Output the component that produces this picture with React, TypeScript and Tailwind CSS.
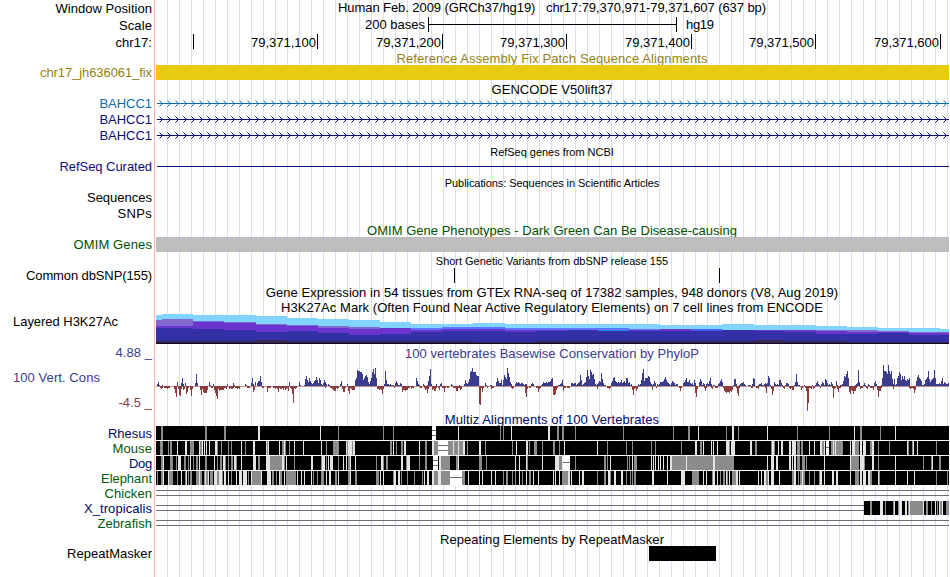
import type { ReactNode } from 'react';

type Run = [number, number];

interface Species {
  name: string;
  color: string;
  width: number;
  gray: Run[];
  light: Run[];
  gaps?: [number, number, 'single' | 'double'][];
}

const X0 = 156;
const X1 = 949;

const canvas = document.createElement('canvas').getContext('2d')!;

// Spreads the letters so the text advances exactly `width` pixels
function spacing(text: string, width: number, size: number) {
  canvas.font = `${size}px "Liberation Sans"`;
  return (width - canvas.measureText(text).width) / text.length;
}

function Fit({ text, width, size = 13 }: { text: string; width: number; size?: number }) {
  return <span style={{ letterSpacing: `${spacing(text, width, size)}px` }}>{text}</span>;
}

interface RowProps {
  height: string;
  label?: string;
  width?: number;
  labelClass?: string;
  side?: ReactNode;
  children?: ReactNode;
}

function Row({ height, label, width = 0, labelClass = 'text-black', side, children }: RowProps) {
  return (
    <div className={`flex shrink-0 ${height}`}>
      <div className={`w-[154px] shrink-0 pr-0.5 text-right ${labelClass}`}>
        {label ? <Fit text={label} width={width} /> : side}
      </div>
      <div className="w-[795px] border-l border-[#ffb0b0] pl-px bg-[linear-gradient(to_right,transparent_11px,#dcdcff_11px)] bg-size-[12px_100%] bg-origin-content bg-clip-content">
        {children}
      </div>
    </div>
  );
}

function Title({ text, width, small, className = '' }: { text: string; width: number; small?: boolean; className?: string }) {
  return (
    <div className={`pr-px text-center whitespace-pre ${small ? 'text-[11px] leading-[15px]' : ''} ${className}`}>
      <Fit text={text} width={width} size={small ? 11 : 13} />
    </div>
  );
}

function Track({ height, children }: { height: number; children: ReactNode }) {
  return (
    <svg className="block" width={X1 - X0} height={height} viewBox={`${X0} 0 ${X1 - X0} ${height}`} shapeRendering="crispEdges">
      {children}
    </svg>
  );
}

function GeneLine({ color }: { color: string }) {
  const arrows = [];
  for (let x = 162; x < X1; x += 8) arrows.push(`M${x - 2.5} 5.5l3 3l-3 3`);
  return (
    <Track height={16}>
      <rect x={157} y={8} width={792} height={1} fill={color} />
      <path d={arrows.join('')} fill="none" stroke={color} strokeWidth={1} shapeRendering="geometricPrecision" />
    </Track>
  );
}

function Ruler() {
  const ticks: [number, string][] = [
    [193, ''],
    [317, '79,371,100'],
    [442, '79,371,200'],
    [566, '79,371,300'],
    [691, '79,371,400'],
    [815, '79,371,500'],
    [940, '79,371,600'],
  ];
  return (
    <Track height={17}>
      {ticks.map(([x, text]) => (
        <g key={x}>
          <rect x={x} y={1} width={1} height={15} />
          {text && <text x={x - 66} y={14} textLength={65} fontSize={13}>{text}</text>}
        </g>
      ))}
    </Track>
  );
}

// start, light blue top, mauve top, violet top, blue top, dark top
const MARKS = [
  [156, 1, 6, 12, 14, 27], [162, 0, 5, 12, 14, 27], [193, 1, 7, 8, 15, 27], [224, 1, 8, 9, 16, 27],
  [256, 2, 10, 11, 18, 26], [287, 4, 11, 12, 17, 27], [318, 5, 12, 14, 19, 27], [349, 6, 13, 15, 21, 27],
  [380, 8, 14, 14, 20, 27], [411, 10, 14, 16, 18, 27], [442, 10, 13, 15, 17, 27], [473, 9, 13, 15, 17, 28],
  [505, 10, 14, 16, 18, 28], [536, 10, 14, 16, 17, 27], [567, 10, 14, 16, 16, 27], [598, 10, 14, 16, 17, 27],
  [629, 10, 15, 16, 17, 27], [660, 11, 15, 15, 17, 27], [691, 11, 15, 17, 17, 27], [722, 10, 16, 16, 16, 27],
  [754, 11, 16, 16, 17, 26], [785, 11, 16, 16, 18, 27], [816, 12, 16, 17, 20, 27], [847, 13, 16, 18, 20, 28],
  [878, 14, 17, 18, 19, 28], [909, 14, 18, 19, 21, 28], [940, 15, 18, 19, 21, 28],
];

function HistoneMarks() {
  return (
    <Track height={30}>
      {MARKS.map(([x, sky, mauve, violet, blue, dark], i) => {
        const w = (MARKS[i + 1]?.[0] ?? X1) - x;
        const bright = x >= 411 && x < 722;
        return (
          <g key={x}>
            <rect x={x} y={sky} width={w} height={30 - sky} fill="#80d4ff" />
            <rect x={x} y={mauve} width={w} height={30 - mauve} fill={bright ? '#6074ff' : '#8468d2'} />
            <rect x={x} y={violet} width={w} height={30 - violet} fill="#6a34cf" />
            <rect x={x} y={blue} width={w} height={30 - blue} fill="#3330a8" />
            <rect x={x} y={dark} width={w} height={30 - dark} fill="#302650" />
          </g>
        );
      })}
      <rect x={598} y={16} width={31} height={1} fill="#1e8ce0" />
      <rect x={691} y={15} width={31} height={2} fill="#4a5cf0" />
      <rect x={X0} y={29} width={793} height={1} fill="#160820" />
    </Track>
  );
}

// Each run is a start position followed by one height per pixel
const CONSERVED = [
  [157, 2, 4, 1], [162, 1], [177, 4], [181, 3, 8, 2], [185, 3], [195, 3, 12, 3], [209, 4, 1], [213, 2], [227, 2],
  [233, 3, 1], [245, 2, 1], [251, 3, 8, 2], [255, 4], [257, 3, 5, 5, 10, 4], [289, 4], [299, 4, 1], [304, 1, 7, 10, 6, 4, 8, 5, 3, 2, 3, 5, 6, 9, 6, 3, 8, 6, 2, 1, 3, 6, 4, 2],
  [328, 2, 1], [340, 2, 5], [347, 2], [355, 6, 8, 16, 15, 15, 14, 14, 12, 6, 8, 10, 11, 9, 4, 2, 5, 8, 14, 17, 12, 18, 8],
  [384, 2, 15, 6, 2, 2, 1, 2, 1, 1, 1], [395, 3, 5, 3, 1, 1, 3, 2], [416, 8, 5, 2, 1], [423, 2, 1], [427, 1, 5, 10, 17, 2], [436, 2], [440, 2, 3], [451, 2, 1], [459, 1],
  [464, 2, 6, 3, 2, 4, 7, 14, 15, 18, 14, 14, 14, 11, 10, 10], [485, 3, 1], [490, 1, 1], [496, 4, 8, 5, 3, 3, 6, 1, 6, 11, 9, 7, 18, 13, 9, 4, 2],
  [515, 2, 4, 3, 4, 3, 2, 3, 3, 2, 1, 2, 2], [531, 2, 3, 2], [541, 1, 2, 4, 3, 3, 4, 3, 4, 4, 5, 7, 8], [558, 1, 1, 2, 3, 6, 1],
  [571, 3, 3, 2, 3, 3, 1, 2, 3, 4, 11, 6, 1, 2, 3, 4, 9, 16, 10, 7, 16, 14, 11, 12, 7, 2, 1, 2, 3, 5, 4, 13, 7, 3, 1, 1],
  [611, 3, 5, 8, 9, 5, 4, 3, 4, 3, 4, 6, 3, 4, 5, 3, 8, 8, 3, 4, 1, 2], [638, 2, 1, 2, 6, 13, 17, 5, 8, 8, 8, 10, 9, 4, 2, 1, 2, 5, 3],
  [657, 2, 1, 2, 4, 4, 4, 5, 7, 9, 6, 4, 3, 2, 1, 3, 5, 4, 3, 1, 2, 2], [683, 3, 4, 6, 8, 4, 4, 6, 3, 2, 3, 1, 6, 3], [699, 4, 7, 5, 1, 3, 2], [706, 2, 3, 2, 5, 8, 2],
  [713, 1, 1], [718, 2, 3, 5, 7, 4], [733, 1, 7, 7, 2], [739, 1, 2, 3, 3, 4, 2, 1], [748, 1, 1, 1], [752, 2, 8, 7], [758, 1, 2, 2, 3, 1, 1, 2, 3, 2, 3, 10, 8, 1],
  [774, 4, 2, 1, 2, 1, 6, 6, 3, 1], [785, 1, 3, 3, 2], [794, 1, 4, 12, 4, 1, 1], [804, 1], [812, 1], [815, 1, 3, 5, 2, 1], [821, 2, 4, 3, 1, 7, 6, 3, 1, 2, 1, 4, 2], [836, 5, 1],
  [840, 1, 1, 2, 5, 10, 9, 12, 15, 8], [855, 1, 2, 3, 16, 4], [863, 1, 3, 1], [868, 2, 1], [874, 3, 5, 2],
  [881, 1, 8, 21, 15, 15, 14, 12, 21, 15, 12, 15, 7, 2, 7, 1, 2, 8, 10, 14, 12, 6, 10, 7, 10, 6, 5, 7, 6, 8], [916, 5, 9, 11, 8, 7, 5, 1, 1, 2, 6, 7, 9, 15, 7, 4, 6, 7, 8, 16, 8, 2, 2, 2, 3, 2, 5, 8, 2, 4, 3, 2, 2, 3],
];

const DIVERGED = [
  [160, 1, 2, 1], [164, 1, 1, 1, 2, 1, 1], [174, 2, 6, 10], [178, 2, 8, 9, 2], [183, 3, 2], [186, 7, 5, 1], [190, 3, 9, 2], [200, 3, 8, 2, 5, 6, 6, 6, 3], [211, 1, 1],
  [214, 3, 6, 9, 12, 2, 4, 3, 3, 3, 3, 1, 1, 2], [229, 2, 1, 2, 2, 1], [235, 1, 1, 2, 1, 2], [247, 1, 1, 1], [253, 5, 3], [262, 1, 1], [267, 5, 1, 1, 1], [273, 1, 1, 2, 1, 2, 5, 1, 2, 2, 1, 3, 1, 3, 2, 1, 4],
  [290, 1, 2, 7, 16, 1, 2, 1], [325, 1], [330, 1, 1, 2, 3, 4, 4, 1, 2, 1], [342, 2, 5, 5, 1], [348, 4, 7, 1, 2, 3, 3, 3], [377, 2, 2, 3, 2, 3, 7, 2],
  [394, 1], [402, 5, 3, 3, 4, 3, 3, 1, 1], [411, 2, 1, 1], [420, 1, 1], [424, 1, 3, 2, 6, 2], [432, 3, 2, 4, 4, 1], [438, 1, 3], [442, 1, 1, 5, 1], [447, 1, 1], [453, 1, 1, 1, 4, 4, 1, 1, 3, 2],
  [479, 17, 18, 1, 5, 1], [487, 1], [491, 2, 1, 1], [511, 1, 2, 1], [525, 6, 10, 2], [529, 1, 1], [536, 1, 1, 5, 2, 1], [553, 8, 8, 7, 3, 1], [563, 4, 1, 1], [567, 1, 1, 1], [597, 2], [607, 1, 1, 2, 1],
  [632, 3, 8, 2, 1, 4, 2], [652, 3], [656, 1], [679, 1, 4, 1], [695, 6, 10, 2], [704, 1, 4, 1], [711, 1, 2], [715, 1, 1, 1], [723, 1, 4, 5, 6, 5, 5, 6, 4, 5, 3], [736, 1, 6, 9, 1],
  [751, 1, 1], [756, 1, 1, 2], [765, 1, 6], [771, 2, 8, 4], [783, 1, 2], [789, 1, 2, 1, 3, 3], [801, 3, 1], [805, 1, 4, 23, 16, 1, 1, 2], [813, 2, 1], [820, 1], [832, 1, 11, 2, 1], [837, 2, 5, 1, 1],
  [849, 5, 7, 3, 4, 7, 4, 4, 1], [860, 2, 1, 1], [866, 1, 2], [870, 1, 1, 1, 3], [877, 3, 10, 4, 4, 1], [893, 2], [909, 1, 2, 1, 1, 2, 6, 3],
];

// y of the zero line inside the PhyloP track
const ZERO = 27;

function bars(runs: number[][], up: boolean) {
  return runs
    .flatMap(([start, ...heights]) =>
      heights.map((h, i) => `M${start + i} ${up ? ZERO - h : ZERO}h1v${up ? h : h + 1}h-1z`)
    )
    .join('');
}

function PhyloP() {
  return (
    <Track height={53}>
      <rect x={X0} y={ZERO} width={793} height={1} fill="#8c3c3c" opacity={0.55} />
      <path d={bars(CONSERVED, true)} fill="#3c3c8c" />
      <path d={bars(DIVERGED, false)} fill="#8c3c3c" />
      {/* value runs past the lower limit */}
      <rect x={807} y={50} width={1} height={2} fill="#ff00ff" />
    </Track>
  );
}

const NAVY = 'text-[#000a64]';
const GREEN = 'text-[#005a0a]';

const SPECIES: Species[] = [
  {
    name: 'Rhesus', color: NAVY, width: 44,
    gray: [[161, 2], [205, 2], [224, 2], [338, 1], [383, 1], [393, 1], [500, 1], [503, 1], [557, 2], [562, 2], [575, 1], [623, 1], [673, 1], [688, 2], [726, 1], [738, 1], [797, 1], [829, 1], [860, 2], [880, 1]],
    light: [[258, 2], [320, 1], [458, 1], [511, 1], [548, 2], [698, 1], [732, 2], [767, 1], [854, 1], [895, 1]],
    gaps: [[432, 4, 'double']],
  },
  {
    name: 'Mouse', color: GREEN, width: 39.5,
    gray: [[160, 3], [168, 1], [170, 2], [190, 4], [200, 2], [217, 1], [221, 1], [228, 1], [231, 1], [245, 1], [267, 1], [282, 2], [285, 1], [289, 1], [326, 1], [333, 6], [347, 1], [352, 1], [390, 2], [396, 1], [401, 2], [425, 2], [434, 4], [448, 5], [454, 4], [459, 4], [467, 1], [485, 1], [512, 1], [529, 1], [534, 3], [542, 1], [553, 2], [559, 1], [607, 1], [626, 1], [632, 1], [651, 1], [655, 1], [681, 1], [700, 2], [729, 1], [755, 2], [771, 1], [774, 1], [797, 3], [801, 2], [822, 2], [831, 2], [834, 1], [836, 7], [855, 4], [870, 2], [878, 1], [889, 1], [908, 1], [912, 1], [936, 1]],
    light: [[177, 1], [185, 2], [199, 1], [202, 1], [204, 1], [206, 1], [209, 1], [215, 2], [241, 1], [253, 2], [266, 1], [268, 1], [279, 1], [284, 1], [294, 1], [303, 1], [321, 1], [346, 1], [348, 4], [353, 2], [393, 1], [404, 2], [419, 1], [432, 2], [453, 1], [458, 1], [463, 2], [479, 2], [516, 1], [526, 2], [564, 1], [597, 1], [695, 2], [703, 1], [711, 1], [713, 1], [717, 1], [726, 3], [731, 4], [750, 2], [772, 2], [778, 1], [781, 2], [789, 2], [792, 4], [809, 1], [814, 1], [820, 2], [824, 1], [833, 1], [835, 1], [850, 1], [852, 3], [860, 2], [863, 3], [872, 2], [907, 1], [913, 1], [917, 1]],
    gaps: [[438, 10, 'double'], [826, 3, 'single']],
  },
  {
    name: 'Dog', color: NAVY, width: 23,
    gray: [[161, 2], [170, 3], [176, 1], [184, 2], [188, 1], [193, 1], [196, 2], [205, 2], [217, 1], [220, 2], [225, 1], [228, 1], [231, 2], [236, 1], [258, 2], [270, 12], [284, 1], [294, 1], [321, 1], [326, 1], [338, 1], [348, 2], [376, 1], [383, 1], [386, 2], [406, 1], [419, 1], [425, 2], [441, 9], [456, 2], [479, 3], [486, 1], [527, 1], [559, 3], [575, 1], [604, 2], [607, 1], [627, 1], [629, 1], [634, 3], [672, 14], [687, 26], [715, 19], [797, 3], [802, 3], [806, 1], [851, 4], [855, 4], [864, 1], [878, 1], [923, 1], [931, 1], [939, 2]],
    light: [[163, 1], [178, 3], [190, 1], [199, 1], [214, 1], [223, 2], [234, 2], [241, 1], [253, 3], [266, 4], [282, 2], [286, 1], [311, 2], [322, 3], [328, 1], [330, 3], [343, 1], [346, 1], [350, 1], [355, 1], [381, 2], [401, 2], [407, 3], [439, 2], [458, 1], [515, 1], [519, 1], [526, 1], [542, 1], [555, 4], [562, 1], [610, 1], [632, 1], [651, 1], [653, 1], [655, 1], [658, 1], [660, 1], [663, 1], [667, 1], [670, 2], [686, 1], [713, 2], [767, 1], [771, 3], [776, 2], [789, 2], [792, 1], [794, 2], [824, 1], [850, 1], [860, 4], [872, 2], [895, 1], [932, 1]],
    gaps: [[433, 5, 'double'], [563, 7, 'single']],
  },
  {
    name: 'Elephant', color: GREEN, width: 51,
    gray: [[157, 1], [161, 2], [169, 4], [177, 1], [185, 1], [188, 1], [190, 2], [196, 3], [200, 2], [204, 1], [206, 2], [210, 3], [217, 2], [222, 1], [231, 1], [248, 1], [252, 9], [272, 2], [276, 1], [280, 2], [286, 10], [313, 1], [317, 1], [321, 3], [335, 2], [348, 3], [355, 2], [376, 3], [393, 1], [401, 1], [407, 1], [414, 1], [422, 1], [434, 4], [441, 9], [462, 3], [503, 1], [506, 2], [512, 1], [515, 1], [522, 1], [529, 2], [562, 6], [597, 1], [604, 2], [610, 1], [626, 1], [630, 1], [632, 1], [634, 2], [692, 7], [712, 1], [720, 1], [723, 2], [727, 1], [732, 4], [766, 2], [792, 2], [798, 1], [800, 2], [803, 2], [809, 1], [814, 1], [819, 1], [855, 4], [870, 2], [879, 1], [936, 1], [947, 1]],
    light: [[163, 1], [168, 1], [181, 1], [186, 1], [199, 1], [205, 1], [208, 1], [214, 3], [219, 3], [224, 2], [228, 1], [236, 1], [239, 3], [243, 4], [251, 1], [261, 1], [267, 1], [268, 3], [279, 1], [284, 1], [297, 1], [301, 1], [304, 1], [311, 1], [326, 1], [329, 2], [338, 1], [350, 1], [380, 1], [383, 1], [394, 2], [398, 2], [424, 1], [427, 2], [432, 2], [438, 3], [468, 1], [479, 1], [482, 1], [491, 1], [495, 1], [519, 1], [526, 1], [533, 1], [538, 1], [553, 1], [555, 1], [559, 1], [568, 2], [571, 1], [579, 1], [582, 2], [608, 2], [614, 2], [621, 2], [652, 2], [667, 1], [681, 4], [703, 1], [706, 1], [713, 2], [717, 1], [726, 1], [729, 1], [736, 2], [739, 1], [758, 1], [761, 1], [764, 2], [768, 1], [771, 3], [779, 1], [794, 2], [802, 1], [820, 2], [824, 1], [832, 2], [836, 2], [850, 1], [860, 2], [863, 3], [868, 2], [878, 1], [895, 1], [907, 1], [914, 1]],
    gaps: [[450, 12, 'single']],
  },
  { name: 'Chicken', color: GREEN, width: 47.5, gray: [], light: [], gaps: [[X0, 793, 'double']] },
  {
    name: 'X_tropicalis', color: NAVY, width: 68,
    gray: [[870, 2], [885, 1], [893, 1], [898, 1], [908, 15], [926, 2], [931, 1], [937, 1], [940, 2], [946, 3]],
    light: [[880, 3], [894, 1], [899, 3], [905, 2], [909, 1], [923, 1], [935, 1], [939, 1], [942, 1]],
    gaps: [[X0, 708, 'double']],
  },
  { name: 'Zebrafish', color: GREEN, width: 54.5, gray: [], light: [], gaps: [[X0, 793, 'double']] },
];

function Alignment({ species }: { species: Species }) {
  const gaps = species.gaps ?? [];
  // aligned blocks are whatever the gaps leave free
  const blocks: Run[] = [];
  let x = X0;
  for (const [start, w] of gaps) {
    if (start > x) blocks.push([x, start - x]);
    x = start + w;
  }
  if (x < X1) blocks.push([x, X1 - x]);
  const draw = (runs: Run[]) => runs.map(([s, w]) => `M${s} 0h${w}v14h-${w}z`).join('');

  return (
    <Track height={15}>
      {gaps.filter(([, w]) => w < 100).map(([s, w]) => (
        <rect key={s} x={s} y={0} width={w} height={15} fill="white" />
      ))}
      <path d={draw(blocks)} fill="black" />
      <path d={draw(species.gray)} fill="#8c8c8c" />
      <path d={draw(species.light)} fill="#e4e4e4" />
      {gaps.map(([s, w, kind]) => (
        <path key={s} d={kind === 'double' ? `M${s} 4h${w}v1h-${w}zM${s} 9h${w}v1h-${w}z` : `M${s} 6h${w}v1h-${w}z`} fill="#707070" />
      ))}
    </Track>
  );
}

export default function App() {
  return (
    <div className="flex h-[577px] w-[950px] flex-col overflow-hidden bg-white font-['Liberation_Sans',Arial,sans-serif] text-[13px] leading-[15px] text-black">
      <Row height="h-[17px]" label="Window Position" width={96.5} labelClass="pt-px">
        <Title text="Human Feb. 2009 (GRCh37/hg19)   chr17:79,370,971-79,371,607 (637 bp)" width={428} />
      </Row>
      <Row height="h-[16px]" label="Scale" width={33} labelClass="pt-px">
        <Track height={16}>
          <text x={365} y={12} textLength={60} fontSize={13}>200 bases</text>
          <path d="M428 0h1v15h-1zM676 0h1v15h-1zM428 7h248v1h-248z" />
          <text x={686} y={12} textLength={28} fontSize={13}>hg19</text>
        </Track>
      </Row>
      <Row height="h-[17px]" label="chr17:" width={36.5} labelClass="pt-0.5">
        <Ruler />
      </Row>

      <Row height="h-[15px]">
        <Title text="Reference Assembly Fix Patch Sequence Alignments" width={312.5} className="pt-px text-[#948218]" />
      </Row>
      <Row height="h-[15px]" label="chr17_jh636061_fix" width={112} labelClass="text-[#948210]">
        <div className="h-[15px] bg-[#e8cc14]" />
      </Row>

      <Row height="h-[15px]">
        <Title text="GENCODE V50lift37" width={121} className="pt-0.5" />
      </Row>
      <Row height="h-[16px]" label="BAHCC1" width={52.5} labelClass="pt-px text-[#0c6cac]">
        <GeneLine color="#0c6cac" />
      </Row>
      <Row height="h-[16px]" label="BAHCC1" width={52.5} labelClass="pt-px text-[#0c0c78]">
        <GeneLine color="#0c0c78" />
      </Row>
      <Row height="h-[16px]" label="BAHCC1" width={52.5} labelClass="pt-px text-[#0c0c78]">
        <GeneLine color="#0c0c78" />
      </Row>

      <Row height="h-[15px]">
        <Title text="RefSeq genes from NCBI" width={123.5} small className="pt-0.5" />
      </Row>
      <Row height="h-[16px]" label="RefSeq Curated" width={92.5} labelClass="pt-px text-[#0c0c78]">
        <Track height={16}>
          <rect x={157} y={8} width={792} height={1} fill="#0c0c78" />
        </Track>
      </Row>

      <Row height="h-[16px]">
        <Title text="Publications: Sequences in Scientific Articles" width={215} small className="pt-0.5" />
      </Row>
      <Row height="h-[16px]" label="Sequences" width={65} />
      <Row height="h-[16px]" label="SNPs" width={34.5} />

      <Row height="h-[15px]">
        <Title text="OMIM Gene Phenotypes - Dark Green Can Be Disease-causing" width={370} className="pt-px text-[#005000]" />
      </Row>
      <Row height="h-[15px]" label="OMIM Genes" width={78.5} labelClass="text-[#005000]">
        <div className="h-[15px] bg-[#bebebe]" />
      </Row>

      <Row height="h-[15px]">
        <Title text="Short Genetic Variants from dbSNP release 155" width={232.5} small className="pt-0.5" />
      </Row>
      <Row height="h-[17px]" label="Common dbSNP(155)" width={126} labelClass="pt-px">
        <Track height={17}>
          <path d="M454 1h1v15h-1zM719 1h1v15h-1z" />
        </Track>
      </Row>

      <Row height="h-[15px]">
        <Title text="Gene Expression in 54 tissues from GTEx RNA-seq of 17382 samples, 948 donors (V8, Aug 2019)" width={573} className="pt-px" />
      </Row>
      <Row height="h-[15px]">
        <Title text="H3K27Ac Mark (Often Found Near Active Regulatory Elements) on 7 cell lines from ENCODE" width={542.5} className="pt-px" />
      </Row>
      <Row height="h-[30px]" side={<div className="pl-[13px] text-left"><Fit text="Layered H3K27Ac" width={105} /></div>}>
        <HistoneMarks />
      </Row>

      <Row
        height="h-[68px]"
        side={
          <div className="flex flex-col pt-px text-[#3c3c8c]">
            <Fit text="4.88 _" width={36.5} />
            <div className="pt-2.5 pl-[13px] text-left"><Fit text="100 Vert. Cons" width={87} /></div>
            <div className="pt-2.5 text-[#8c3c3c]"><Fit text="-4.5 _" width={33.5} /></div>
          </div>
        }
      >
        <Title text="100 vertebrates Basewise Conservation by PhyloP" width={294} className="h-[15px] pt-0.5 text-[#3c3c8c]" />
        <PhyloP />
      </Row>

      <Row height="h-[14px]">
        <Title text="Multiz Alignments of 100 Vertebrates" width={215} className={NAVY} />
      </Row>
      {SPECIES.map((species) => (
        <Row key={species.name} height="h-[15px]" label={species.name} width={species.width} labelClass={species.color}>
          <Alignment species={species} />
        </Row>
      ))}

      <Row height="h-[15px]">
        <Title text="Repeating Elements by RepeatMasker" width={224} className="pt-px" />
      </Row>
      <Row height="h-[15px]" label="RepeatMasker" width={85}>
        <Track height={15}>
          <rect x={649} y={0} width={67} height={15} />
        </Track>
      </Row>
      <Row height="h-[16px]" />
    </div>
  );
}
